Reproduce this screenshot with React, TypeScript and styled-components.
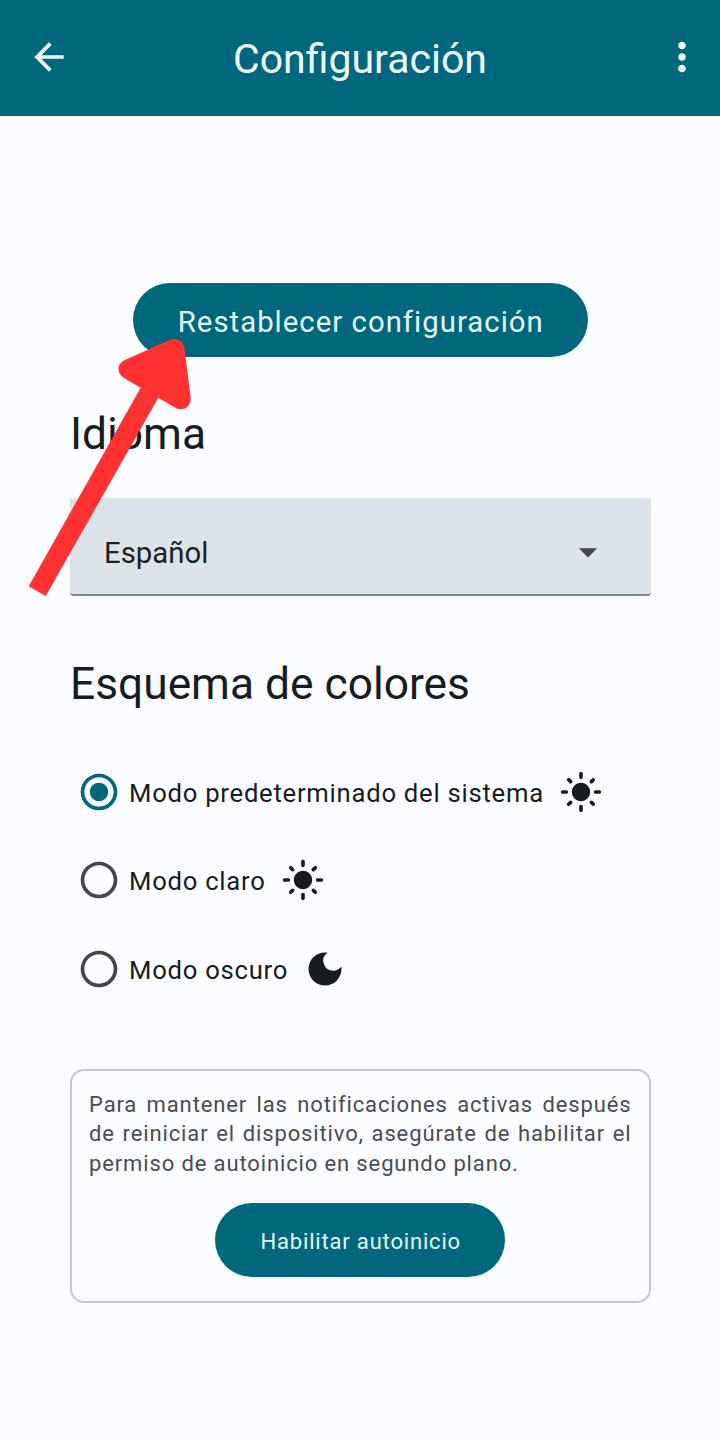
import React, { useState } from "react";
import styled, { createGlobalStyle } from "styled-components";
import {
  MdArrowBack,
  MdArrowDropDown,
  MdDarkMode,
  MdLightMode,
  MdMoreVert,
  MdRadioButtonChecked,
  MdRadioButtonUnchecked,
} from "react-icons/md";

const GlobalStyle = createGlobalStyle`
  *, *::before, *::after { box-sizing: border-box; }
  body { margin: 0; background: #fbfcff; }
  button { font: inherit; border: 0; padding: 0; background: none; cursor: pointer; }
`;

const Screen = styled.div`
  position: relative;
  width: 720px;
  height: 1440px;
  overflow: hidden;
  background: #fbfcff;
  color: #191c1e;
  font-family: Roboto, "Liberation Sans", sans-serif;
`;

const AppBar = styled.header`
  display: flex;
  align-items: center;
  height: 116px;
  padding: 0 15px 2px 27px;
  background: #00677d;
  color: #eefcff;
`;

const IconButton = styled.button`
  display: flex;
  flex: none;
  color: inherit;
`;

const Title = styled.h1`
  flex: 1;
  margin: 4px 0 0;
  padding-right: 10px;
  text-align: center;
  font-size: 41px;
  line-height: 48px;
  font-weight: 400;
`;

const Content = styled.main`
  display: flex;
  flex-direction: column;
  padding: 167px 69.5px 0 70px;
`;

const PillButton = styled.button<{ $width: number; $size: number; $spacing: number }>`
  align-self: center;
  width: ${(p) => p.$width}px;
  height: 74px;
  padding: 3px 0 0 1px;
  border-radius: 37px;
  background: #00677d;
  color: #e2f8fc;
  font-size: ${(p) => p.$size}px;
  letter-spacing: ${(p) => p.$spacing}px;
  white-space: nowrap;
`;

const SectionTitle = styled.h2<{ $top: number }>`
  margin: ${(p) => p.$top}px 0 0;
  font-size: 44.3px;
  line-height: 52px;
  font-weight: 400;
`;

const Select = styled.button`
  display: flex;
  align-items: center;
  justify-content: space-between;
  height: 98px;
  margin-top: 38px;
  padding: 13px 41px 0 34px;
  background: #dbe3e9;
  border-bottom: 2px solid #7d8287;
  border-radius: 1px 1px 4px 4px;
  color: #1d1f24;
  font-size: 29.33px;

  svg {
    margin-top: -1px;
    color: #44464e;
  }
`;

const RadioGroup = styled.div`
  display: flex;
  flex-direction: column;
  gap: 44.7px;
  margin-top: 59.5px;
  padding-left: 7px;
`;

const RadioRow = styled.button`
  display: flex;
  align-items: center;
  height: 44px;
  color: #191c1e;
`;

const RadioMark = styled.span<{ $active: boolean }>`
  display: flex;
  color: ${(p) => (p.$active ? "#00677d" : "#44474a")};
`;

const RadioLabel = styled.span`
  margin: 2px 15px 0 8px;
  font-size: 25.67px;
  letter-spacing: 0.74px;
  white-space: nowrap;
`;

const Card = styled.section`
  display: flex;
  flex-direction: column;
  height: 234px;
  margin-top: 78px;
  padding: 19px 17px 0;
  border: 2px solid #c7c8cd;
  border-radius: 14px;
`;

const CardText = styled.p`
  margin: 0 0 24.5px;
  color: #4a4c51;
  font-size: 22px;
  line-height: 29.6px;
  letter-spacing: 0.87px;
  text-align: justify;
`;

const Pointer = styled.svg`
  position: absolute;
  left: 20px;
  top: 330px;
`;

const modes = [
  { label: "Modo predeterminado del sistema", Icon: MdLightMode },
  { label: "Modo claro", Icon: MdLightMode },
  { label: "Modo oscuro", Icon: MdDarkMode },
];

export default function App() {
  const [selected, setSelected] = useState(0);

  return (
    <Screen>
      <GlobalStyle />
      <AppBar>
        <IconButton aria-label="Volver">
          <MdArrowBack size={44} />
        </IconButton>
        <Title>Configuración</Title>
        <IconButton aria-label="Más opciones">
          <MdMoreVert size={46} />
        </IconButton>
      </AppBar>

      <Content>
        <PillButton $width={455} $size={29.33} $spacing={1.02}>
          Restablecer configuración
        </PillButton>

        <SectionTitle $top={51}>Idioma</SectionTitle>
        <Select>
          Español
          <MdArrowDropDown size={44} />
        </Select>

        <SectionTitle $top={62}>Esquema de colores</SectionTitle>
        <RadioGroup role="radiogroup">
          {modes.map(({ label, Icon }, i) => (
            <RadioRow
              key={label}
              role="radio"
              aria-checked={selected === i}
              onClick={() => setSelected(i)}
            >
              <RadioMark $active={selected === i}>
                {selected === i ? (
                  <MdRadioButtonChecked size={44} />
                ) : (
                  <MdRadioButtonUnchecked size={44} />
                )}
              </RadioMark>
              <RadioLabel>{label}</RadioLabel>
              <Icon size={44} />
            </RadioRow>
          ))}
        </RadioGroup>

        <Card>
          <CardText>
            Para mantener las notificaciones activas después de reiniciar el
            dispositivo, asegúrate de habilitar el permiso de autoinicio en
            segundo plano.
          </CardText>
          <PillButton $width={290} $size={22} $spacing={0.82}>
            Habilitar autoinicio
          </PillButton>
        </Card>
      </Content>

      <Pointer width="180" height="275" viewBox="20 330 180 275" aria-hidden="true">
        <path
          fill="#ff3131"
          d="M28.7 586.3 140.7 387.7 124 378C116 373 117 363.5 125 360L169.5 340C177 337 184 341 184.5 348.5L190.7 397.5C191.5 406.5 183 412 175 407.5L158.3 397.7 45.7 596Z"
        />
      </Pointer>
    </Screen>
  );
}
